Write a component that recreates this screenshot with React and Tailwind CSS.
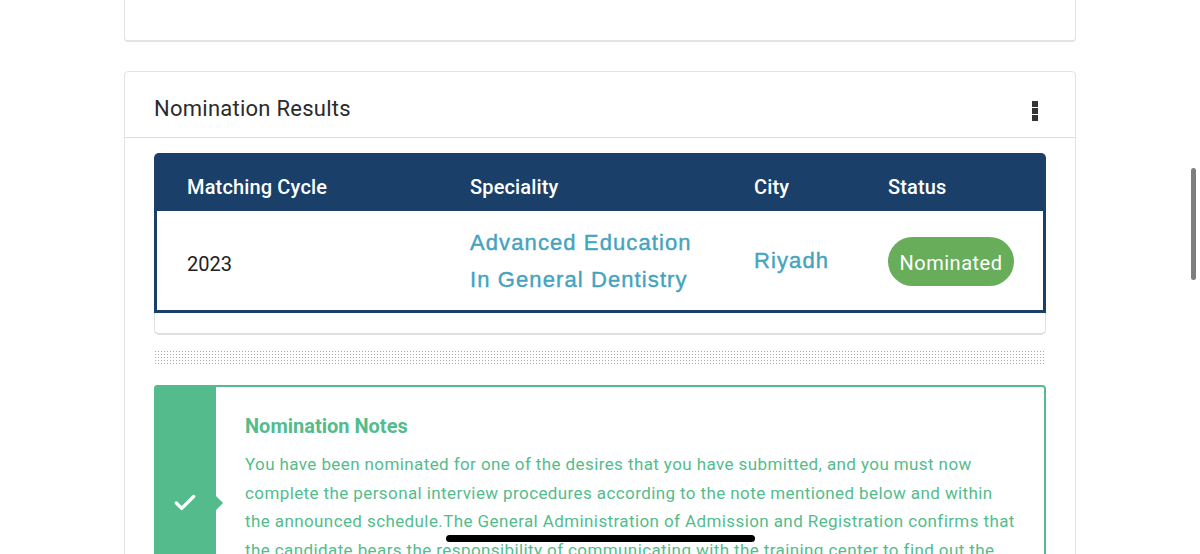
import React from 'react';
import { Check } from 'lucide-react';

const App = () => {
  return (
    <div className="relative h-[554px] w-[1200px] overflow-hidden bg-white font-['Roboto',sans-serif]">
      <div className="mx-auto flex w-[952px] flex-col gap-[29px]">
        {/* previous card, only its bottom edge shows */}
        <div className="h-[42px] rounded-b-[4px] border-x border-b-2 border-[#e3e3e3] bg-white" />

        <div className="h-[600px] rounded-[4px] border border-[#e3e3e3] bg-white">
          <div className="flex h-[66px] items-center justify-between border-b border-[#dcdcdc] pl-[29px] pr-[37px] pt-[8px]">
            <h2 className="text-[22px] tracking-[0.25px] text-[#2b2b2b]">Nomination Results</h2>
            <div className="mt-[4px] flex flex-col gap-px">
              <span className="h-[6px] w-[6px] bg-[#333]" />
              <span className="h-[6px] w-[6px] bg-[#333]" />
              <span className="h-[6px] w-[6px] bg-[#333]" />
            </div>
          </div>

          <div className="px-[29px] pt-[15px]">
            <div className="h-[182px] rounded-[5px] border-b-2 border-x border-[#e0e0e0]">
              <div className="-mx-px">
                <div className="flex h-[58px] items-center rounded-t-[5px] bg-[#1a3f69] pl-[33px] pt-[10px] text-[20px] font-medium tracking-[0.15px] text-white">
                  <div className="w-[283px]">Matching Cycle</div>
                  <div className="w-[284px]">Speciality</div>
                  <div className="w-[134px]">City</div>
                  <div>Status</div>
                </div>
                <div className="flex h-[102px] items-center border-x-[3px] border-b-[3px] border-[#1a3f69] pl-[30px] pt-[2px]">
                  <div className="w-[283px] pt-[5px] text-[20px] text-[#222]">2023</div>
                  <div className="mb-[2px] w-[284px] font-['Liberation_Sans',sans-serif] text-[22px] font-medium leading-[37px] tracking-[1.1px] text-[#44a3bf] [-webkit-text-stroke:0.4px_#44a3bf]">
                    Advanced Education
                    <br />
                    In General Dentistry
                  </div>
                  <div className="mb-[2px] w-[134px] font-['Liberation_Sans',sans-serif] text-[22px] tracking-[1.1px] text-[#44a3bf] [-webkit-text-stroke:0.4px_#44a3bf]">
                    Riyadh
                  </div>
                  <div className="flex h-[49px] w-[126px] items-center justify-center rounded-full bg-[#68ad5a] pt-[2px] text-[20px] tracking-[0.5px] text-white">
                    Nominated
                  </div>
                </div>
              </div>
            </div>

            <div className="mt-[15px] h-[15px] bg-[radial-gradient(#aaaaaa_0.8px,transparent_0.9px)] bg-[length:3px_3px]" />

            <div className="mt-[20px] flex min-h-[236px] rounded-[4px] border-2 border-[#54bc8c]">
              <div className="relative -m-[2px] flex w-[62px] shrink-0 items-center justify-center rounded-l-[4px] bg-[#54bc8c]">
                <Check className="h-[26px] w-[26px] text-white" strokeWidth={3} />
                <span className="absolute -right-[5px] top-1/2 h-[10px] w-[10px] -translate-y-1/2 rotate-45 bg-[#54bc8c]" />
              </div>
              <div className="pl-[31px] pt-[25px] text-[#54bc8c]">
                <h3 className="text-[20px] font-bold leading-[28px]">Nomination Notes</h3>
                <p className="mt-[10px] whitespace-nowrap text-[17px] leading-[28.5px] tracking-[0.4px]">
                  You have been nominated for one of the desires that you have submitted, and you must now
                  <br />
                  complete the personal interview procedures according to the note mentioned below and within
                  <br />
                  the announced schedule.The General Administration of Admission and Registration confirms that
                  <br />
                  the candidate bears the responsibility of communicating with the training center to find out the
                </p>
              </div>
            </div>
          </div>
        </div>
      </div>

      {/* overlay scrollbar */}
      <div className="absolute left-[1191px] top-[168px] h-[112px] w-[5px] rounded-full bg-[#7d7d7d]" />
      {/* home indicator */}
      <div className="absolute left-[446px] top-[535px] h-[7px] w-[309px] rounded-full bg-black" />
    </div>
  );
};

export default App;
